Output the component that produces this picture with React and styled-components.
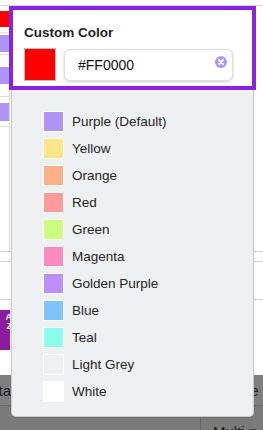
import React from "react";
import styled, { createGlobalStyle } from "styled-components";

const Global = createGlobalStyle`
  html, body { margin: 0; padding: 0; background: #fff; }
  body { font-family: "Liberation Sans", Arial, sans-serif; }
  * { box-sizing: border-box; }
`;

const Page = styled.div`
  position: relative;
  width: 263px;
  height: 430px;
  overflow: hidden;
  background: #fff;
  display: flex;
  flex-direction: column;
`;

const TopRule = styled.div`
  height: 6px;
  flex: none;
  border-bottom: 1px solid #d4d4d4;
`;

const Upper = styled.div`
  display: grid;
  grid-template-columns: 10px 1fr;
  height: 246px;
  flex: none;
  border-bottom: 1px solid #d4d4d4;
`;

const SwatchCol = styled.div`
  display: flex;
  flex-direction: column;
  border-right: 1px solid #dcdcdc;
`;

const SwatchCell = styled.div`
  height: ${(p) => p.$h}px;
  flex: none;
  display: flex;
  align-items: center;
  border-bottom: 1px solid #dcdcdc;
`;

const CellChip = styled.div`
  width: 9px;
  height: ${(p) => p.$h || 17}px;
  background: ${(p) => p.$c};
`;

const Band = styled.div`
  height: ${(p) => p.$h}px;
  flex: none;
  border-bottom: ${(p) => (p.$line ? "1px solid #d4d4d4" : "none")};
  display: flex;
  align-items: flex-start;
  padding-top: ${(p) => p.$pt || 0}px;
`;

const SortButton = styled.div`
  width: 32px;
  height: 40px;
  margin-left: -22px;
  background: #8d1b9f;
  display: flex;
  flex-direction: column;
  align-items: flex-end;
  justify-content: flex-start;
  padding: 3px 0 0 0;
  color: #fff;
  font-weight: bold;
  font-size: 9px;
  line-height: 9px;
`;

const SortGlyph = styled.span`
  margin-right: -2px;
`;

const DarkBar = styled.div`
  height: 30px;
  flex: none;
  background: #7f7f7f;
  display: flex;
  align-items: center;
  justify-content: space-between;
  font-size: 15px;
  color: #1c1c1c;
  overflow: hidden;
`;

const LeftClip = styled.div`
  width: 11px;
  display: flex;
  justify-content: flex-end;
  overflow: hidden;
  white-space: nowrap;
`;

const RightClip = styled.div`
  width: 20px;
  overflow: hidden;
  white-space: nowrap;
`;

const ShiftedText = styled.span`
  margin-left: -11px;
`;

const BottomBar = styled.div`
  flex: 1;
  background: #7a7a7a;
  border-top: 1px solid #6c6c6c;
  display: grid;
  grid-template-columns: 200px 1fr;
`;

const BottomCell = styled.div`
  border-left: ${(p) => (p.$divider ? "1px solid #666" : "none")};
  padding: 17px 0 0 12px;
  font-size: 15px;
  color: #1c1c1c;
  white-space: nowrap;
`;

const Popup = styled.div`
  position: absolute;
  left: 9px;
  top: 6px;
  width: 247px;
  display: flex;
  flex-direction: column;
`;

const Header = styled.div`
  background: #fff;
  border: 4px solid #8a22de;
  padding: 15px 19px 5px 11px;
  display: flex;
  flex-direction: column;
  gap: 8px;
`;

const Title = styled.div`
  font-size: 13.5px;
  line-height: 15px;
  font-weight: bold;
  color: #222;
`;

const InputRow = styled.div`
  display: flex;
  align-items: center;
  gap: 8px;
  height: 33px;
`;

const BigSwatch = styled.div`
  width: 32px;
  height: 33px;
  flex: none;
  background: ${(p) => p.$c};
  border: 1px solid #bdbdbd;
`;

const InputBox = styled.div`
  flex: 1;
  height: 32px;
  border: 1px solid #dedede;
  border-radius: 6px;
  box-shadow: 0 1px 3px rgba(0, 0, 0, 0.18);
  display: flex;
  align-items: center;
  padding: 0 5px 0 13px;
  background: #fff;
`;

const InputText = styled.div`
  flex: 1;
  font-size: 14px;
  color: #111;
  padding-top: 1px;
`;

const ClearIcon = styled.svg`
  width: 12px;
  height: 12px;
  flex: none;
  margin-top: -6px;
`;

const Panel = styled.div`
  margin: 0 2px;
  background: #eff0f2;
  border: 1px solid #c9c9c9;
  border-top: none;
  border-radius: 0 0 5px 5px;
  padding: 18px 0 11px 31px;
  display: flex;
  flex-direction: column;
  box-shadow: 0 1px 2px rgba(0, 0, 0, 0.08);
`;

const Item = styled.div`
  height: 27px;
  display: flex;
  align-items: center;
  gap: 8px;
`;

const ItemSwatch = styled.div`
  width: 21px;
  height: 21px;
  flex: none;
  background: ${(p) => p.$c};
  border: 1px solid #fff;
`;

const ItemLabel = styled.div`
  font-size: 13.5px;
  color: #262626;
`;

const colors = [
  ["Purple (Default)", "#ae94f5"],
  ["Yellow", "#fde48a"],
  ["Orange", "#feb088"],
  ["Red", "#ff9b98"],
  ["Green", "#cdfd80"],
  ["Magenta", "#fe8bbf"],
  ["Golden Purple", "#bc8ffa"],
  ["Blue", "#7fc3fb"],
  ["Teal", "#8cfdec"],
  ["Light Grey", "#eff0f2"],
  ["White", "#ffffff"],
];

export default function App() {
  return (
    <>
      <Global />
      <Page>
        <TopRule />
        <Upper>
          <SwatchCol>
            <SwatchCell $h={27}>
              <CellChip $c="#ff0000" $h={16} />
            </SwatchCell>
            <SwatchCell $h={22}>
              <CellChip $c="#ae94f5" $h={17} />
            </SwatchCell>
            <SwatchCell $h={42}>
              <CellChip $c="#ae94f5" $h={17} />
            </SwatchCell>
            <SwatchCell $h={30}>
              <CellChip $c="#ae94f5" $h={18} />
            </SwatchCell>
          </SwatchCol>
          <div />
        </Upper>
        <Band $h={10} $line />
        <Band $h={38} $line />
        <Band $h={75} $pt={10}>
          <SortButton>
            <SortGlyph>A</SortGlyph>
            <SortGlyph>Z</SortGlyph>
          </SortButton>
        </Band>
        <DarkBar>
          <LeftClip>Data</LeftClip>
          <RightClip>
            <ShiftedText>Use</ShiftedText>
          </RightClip>
        </DarkBar>
        <BottomBar>
          <BottomCell />
          <BottomCell $divider>Multi ▾</BottomCell>
        </BottomBar>

        <Popup>
          <Header>
            <Title>Custom Color</Title>
            <InputRow>
              <BigSwatch $c="#ff0000" />
              <InputBox>
                <InputText>#FF0000</InputText>
                <ClearIcon viewBox="0 0 12 12">
                  <circle cx="6" cy="6" r="6" fill="#ae96f2" />
                  <path
                    d="M4 4 L8 8 M8 4 L4 8"
                    stroke="#fff"
                    strokeWidth="1.8"
                    strokeLinecap="round"
                  />
                </ClearIcon>
              </InputBox>
            </InputRow>
          </Header>
          <Panel>
            {colors.map(([name, c]) => (
              <Item key={name}>
                <ItemSwatch $c={c} />
                <ItemLabel>{name}</ItemLabel>
              </Item>
            ))}
          </Panel>
        </Popup>
      </Page>
    </>
  );
}
